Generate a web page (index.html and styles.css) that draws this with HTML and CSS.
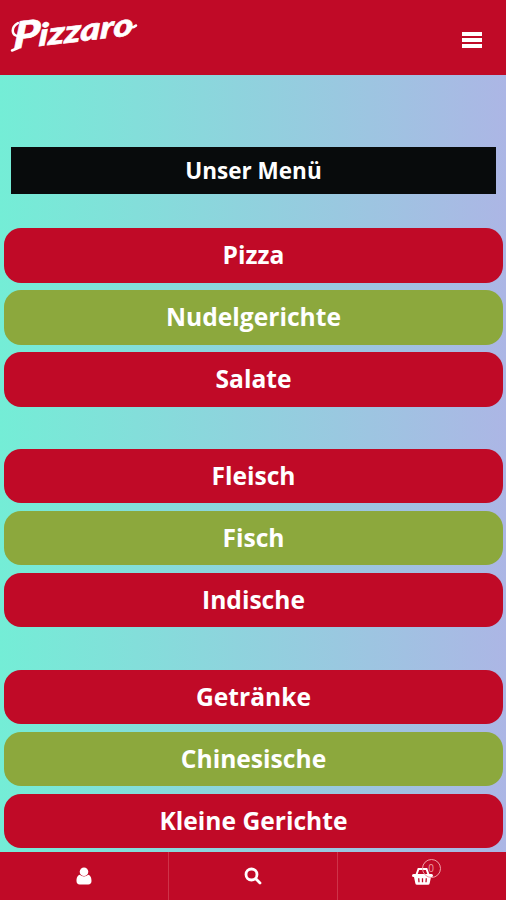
FILE: index.html
```
<!DOCTYPE html>
<html lang="de">
<head>
  <meta charset="UTF-8" />
  <meta name="viewport" content="width=device-width, initial-scale=1.0"/>
  <title>Pizzaro</title>
  <link rel="stylesheet" href="styles.css">
</head>
<body>

  <header class="header">
    <a class="logo" href="#">
      <svg width="140" height="60" viewBox="0 0 140 60">
        <g transform="translate(13 49) rotate(-6.500) skewX(-10) scale(1.220 1)">
          <text class="logo-text" y="0"><tspan class="logo-cap">P</tspan><tspan dx="-1">izzaro</tspan></text>
        </g>
        <path class="swash" d="M18 36c-7-1-7-9 0-13"/>
        <path class="swash" d="M12 50.500l6-2.500"/>
        <path class="swash" d="M131 27.500q3 0 5-2"/>
      </svg>
    </a>
    <button class="menu-btn" aria-label="Menu">
      <span></span>
      <span></span>
      <span></span>
    </button>
  </header>

  <main class="content">
    <h1>Unser Menü</h1>

    <div class="group">
      <a class="item" href="#">Pizza</a>
      <a class="item green" href="#">Nudelgerichte</a>
      <a class="item" href="#">Salate</a>
    </div>

    <div class="group">
      <a class="item" href="#">Fleisch</a>
      <a class="item green" href="#">Fisch</a>
      <a class="item" href="#">Indische</a>
    </div>

    <div class="group">
      <a class="item" href="#">Getränke</a>
      <a class="item green" href="#">Chinesische</a>
      <a class="item" href="#">Kleine Gerichte</a>
    </div>
  </main>

  <nav class="footer-bar">
    <a href="#" aria-label="Konto">
      <svg width="16" height="18" viewBox="0 0 16 18">
        <circle cx="8" cy="4.700" r="4.300"/>
        <path d="M4 7.800C1.300 8.300.5 11 .5 14c0 2.300 1.200 3.500 3.200 3.500h8.600c2 0 3.200-1.200 3.200-3.500 0-3-.8-5.700-3.500-6.200C9.700 10 6.300 10 4 7.800z"/>
      </svg>
    </a>
    <a href="#" aria-label="Suche">
      <svg width="18" height="18" viewBox="0 0 18 18">
        <circle class="line" cx="7.500" cy="7.500" r="5.500"/>
        <path class="line" d="M11.800 11.800l4.200 4.200"/>
      </svg>
    </a>
    <a href="#" aria-label="Warenkorb">
      <span class="cart">
        <svg width="21" height="18" viewBox="0 0 21 18">
          <path d="M1.500 7h18q1.500 0 1.500 1.500T19.500 10H19l-1.300 6.300q-.3 1.500-1.700 1.500H5q-1.400 0-1.700-1.500L2 10h-.5Q0 10 0 8.500T1.500 7z"/>
          <path class="handle" d="M4.500 7.500l2-5.500h2M16.500 7.500l-2-5.500h-2M8 2h5"/>
          <path class="slot" d="M6.700 11.200l.3 4M10.500 11.200v4M14.300 11.200l-.3 4"/>
        </svg>
        <span class="count">0</span>
      </span>
    </a>
  </nav>

</body>
</html>
```
FILE: styles.css
```
* {
  box-sizing: border-box;
}

body {
  margin: 0;
  height: 900px;
  display: flex;
  flex-direction: column;
  overflow: hidden;
  font-family: "Open Sans", "Noto Sans", sans-serif;
  background: linear-gradient(to right, #74edd6, #acb6e5);
}

a {
  color: white;
  text-decoration: none;
}

.header {
  height: 75px;
  flex-shrink: 0;
  display: flex;
  justify-content: space-between;
  align-items: flex-start;
  padding-right: 24px;
  background-color: #c00a27;
}

.logo svg {
  display: block;
}

.logo-text {
  font-family: Lato, sans-serif;
  font-size: 31px;
  font-weight: 900;
  font-style: italic;
  fill: white;
  stroke: white;
  stroke-width: 0.6;
}

.logo-cap {
  font-size: 37px;
}

.swash {
  fill: none;
  stroke: white;
  stroke-width: 2.5;
  stroke-linecap: round;
}

.menu-btn {
  display: flex;
  flex-direction: column;
  gap: 2.5px;
  margin-top: 32px;
  padding: 0;
  border: none;
  background: none;
}

.menu-btn span {
  width: 20px;
  height: 3.5px;
  background-color: white;
}

.content {
  flex: 1;
  min-height: 0;
  overflow: hidden;
  padding: 72px 3px 0 4px;
}

h1 {
  margin: 0 7px 34.4px;
  height: 47px;
  line-height: 47px;
  font-size: 22.5px;
  font-weight: 700;
  text-align: center;
  color: white;
  background-color: #080b0c;
}

.group {
  display: flex;
  flex-direction: column;
  gap: 7.5px;
  margin-bottom: 42.5px;
}

.item {
  height: 54.4px;
  line-height: 54px;
  border-radius: 17px;
  font-size: 24.6px;
  font-weight: 700;
  text-align: center;
  background-color: #c00a27;
}

.green {
  background-color: #8ca83d;
}

.footer-bar {
  height: 48px;
  flex-shrink: 0;
  display: flex;
  background-color: #c00a27;
}

.footer-bar a {
  flex: 1;
  display: flex;
  justify-content: center;
  align-items: center;
}

.footer-bar a + a {
  border-left: 1px solid #cf3349;
}

.footer-bar svg {
  display: block;
  fill: white;
}

.footer-bar .line {
  fill: none;
  stroke: white;
  stroke-width: 2.8;
  stroke-linecap: round;
}

.footer-bar .handle {
  fill: none;
  stroke: white;
  stroke-width: 2;
}

.footer-bar .slot {
  stroke: #c00a27;
  stroke-width: 1.3;
}

.cart {
  position: relative;
}

.count {
  position: absolute;
  top: -8px;
  left: 10px;
  width: 19px;
  height: 19px;
  border: 1px solid #f0a0a8;
  border-radius: 50%;
  font-size: 10px;
  line-height: 17px;
  text-align: center;
  color: #f0a0a8;
}
```
